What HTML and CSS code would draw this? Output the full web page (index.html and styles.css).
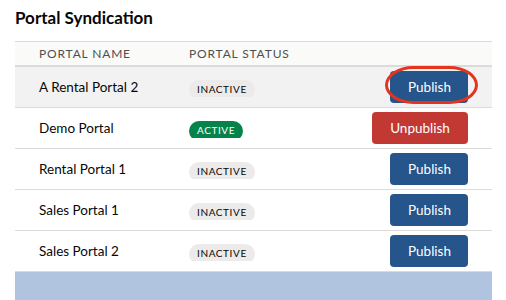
FILE: index.html
```html
<!DOCTYPE html>
<html lang="en">
<head>
    <title>Portal Syndication</title>
    <meta charset="utf-8">
    <link rel="stylesheet" href="styles.css">
</head>
<body>
    <main class="card">
        <h2 class="card-title">Portal Syndication</h2>
        <table class="portal-table">
            <thead>
                <tr>
                    <th class="col-name">Portal Name</th>
                    <th class="col-status">Portal Status</th>
                    <th class="col-action"></th>
                </tr>
            </thead>
            <tbody>
                <tr class="selected">
                    <td class="col-name">A Rental Portal 2</td>
                    <td class="col-status"><span class="badge-clip"><span class="badge">Inactive</span></span></td>
                    <td class="col-action">
                        <span class="highlight">
                            <button type="button" class="btn btn-publish">Publish</button>
                            <span class="ring"></span>
                        </span>
                    </td>
                </tr>
                <tr>
                    <td class="col-name">Demo Portal</td>
                    <td class="col-status"><span class="badge-clip"><span class="badge badge-active">Active</span></span></td>
                    <td class="col-action"><button type="button" class="btn btn-unpublish">Unpublish</button></td>
                </tr>
                <tr>
                    <td class="col-name">Rental Portal 1</td>
                    <td class="col-status"><span class="badge-clip"><span class="badge">Inactive</span></span></td>
                    <td class="col-action"><button type="button" class="btn btn-publish">Publish</button></td>
                </tr>
                <tr>
                    <td class="col-name">Sales Portal 1</td>
                    <td class="col-status"><span class="badge-clip"><span class="badge">Inactive</span></span></td>
                    <td class="col-action"><button type="button" class="btn btn-publish">Publish</button></td>
                </tr>
                <tr>
                    <td class="col-name">Sales Portal 2</td>
                    <td class="col-status"><span class="badge-clip"><span class="badge">Inactive</span></span></td>
                    <td class="col-action"><button type="button" class="btn btn-publish">Publish</button></td>
                </tr>
            </tbody>
        </table>
        <div class="footer-band"></div>
    </main>
</body>
</html>
```
FILE: styles.css
```css
html {
    font-family: Lato, "Open Sans", sans-serif;
    color: #080707;
}
body {
    margin: 0;
    background: #fff;
}
.card {
    padding: 0 14px 0 15px;
}
.card-title {
    margin: 0;
    padding: 9px 0 14px;
    font-size: 17px;
    font-weight: 700;
    line-height: 18px;
}
.portal-table {
    width: 477px;
    border-collapse: collapse;
    font-size: 13.5px;
}
.portal-table th {
    height: 23px;
    padding: 0;
    text-align: left;
    font-size: 12px;
    font-weight: 400;
    color: #514f4d;
    text-transform: uppercase;
    letter-spacing: .07em;
    background: #fafaf9;
    border-top: 1px solid #dddbda;
    border-bottom: 2px solid #dddbda;
}
.portal-table td {
    height: 40px;
    padding: 0;
    border-bottom: 1px solid #dddbda;
}
.portal-table .selected td {
    background: #f3f2f2;
}
.col-name {
    width: 150px;
    padding-left: 24px !important;
}
.col-status {
    width: 150px;
}
.col-action {
    text-align: right;
    padding-right: 24px !important;
}
.badge-clip {
    display: inline-block;
    height: 17px;
    overflow: hidden;
    vertical-align: middle;
    margin-top: 2px;
}
.badge {
    display: inline-block;
    height: 20px;
    padding: 0 8px;
    border-radius: 10px;
    background: #ecebea;
    color: #080707;
    font-size: 10px;
    line-height: 19px;
    letter-spacing: .06em;
    text-transform: uppercase;
}
.badge-active {
    background: #04844b;
    color: #fff;
}
.btn {
    height: 32px;
    padding: 0 18px;
    border: 0;
    border-radius: 4px;
    font-family: inherit;
    font-size: 13.5px;
    color: #fff;
    vertical-align: middle;
}
.btn-publish {
    width: 78px;
    background: #25558a;
}
.btn-unpublish {
    width: 96px;
    background: #c23934;
}
.highlight {
    position: relative;
    display: inline-block;
}
.ring {
    position: absolute;
    left: -5px;
    right: -10px;
    top: -5px;
    bottom: -1px;
    border: 3px solid #e2341f;
    border-radius: 30px / 20px;
}
.footer-band {
    width: 477px;
    height: 30px;
    background: #b0c4df;
}
```
